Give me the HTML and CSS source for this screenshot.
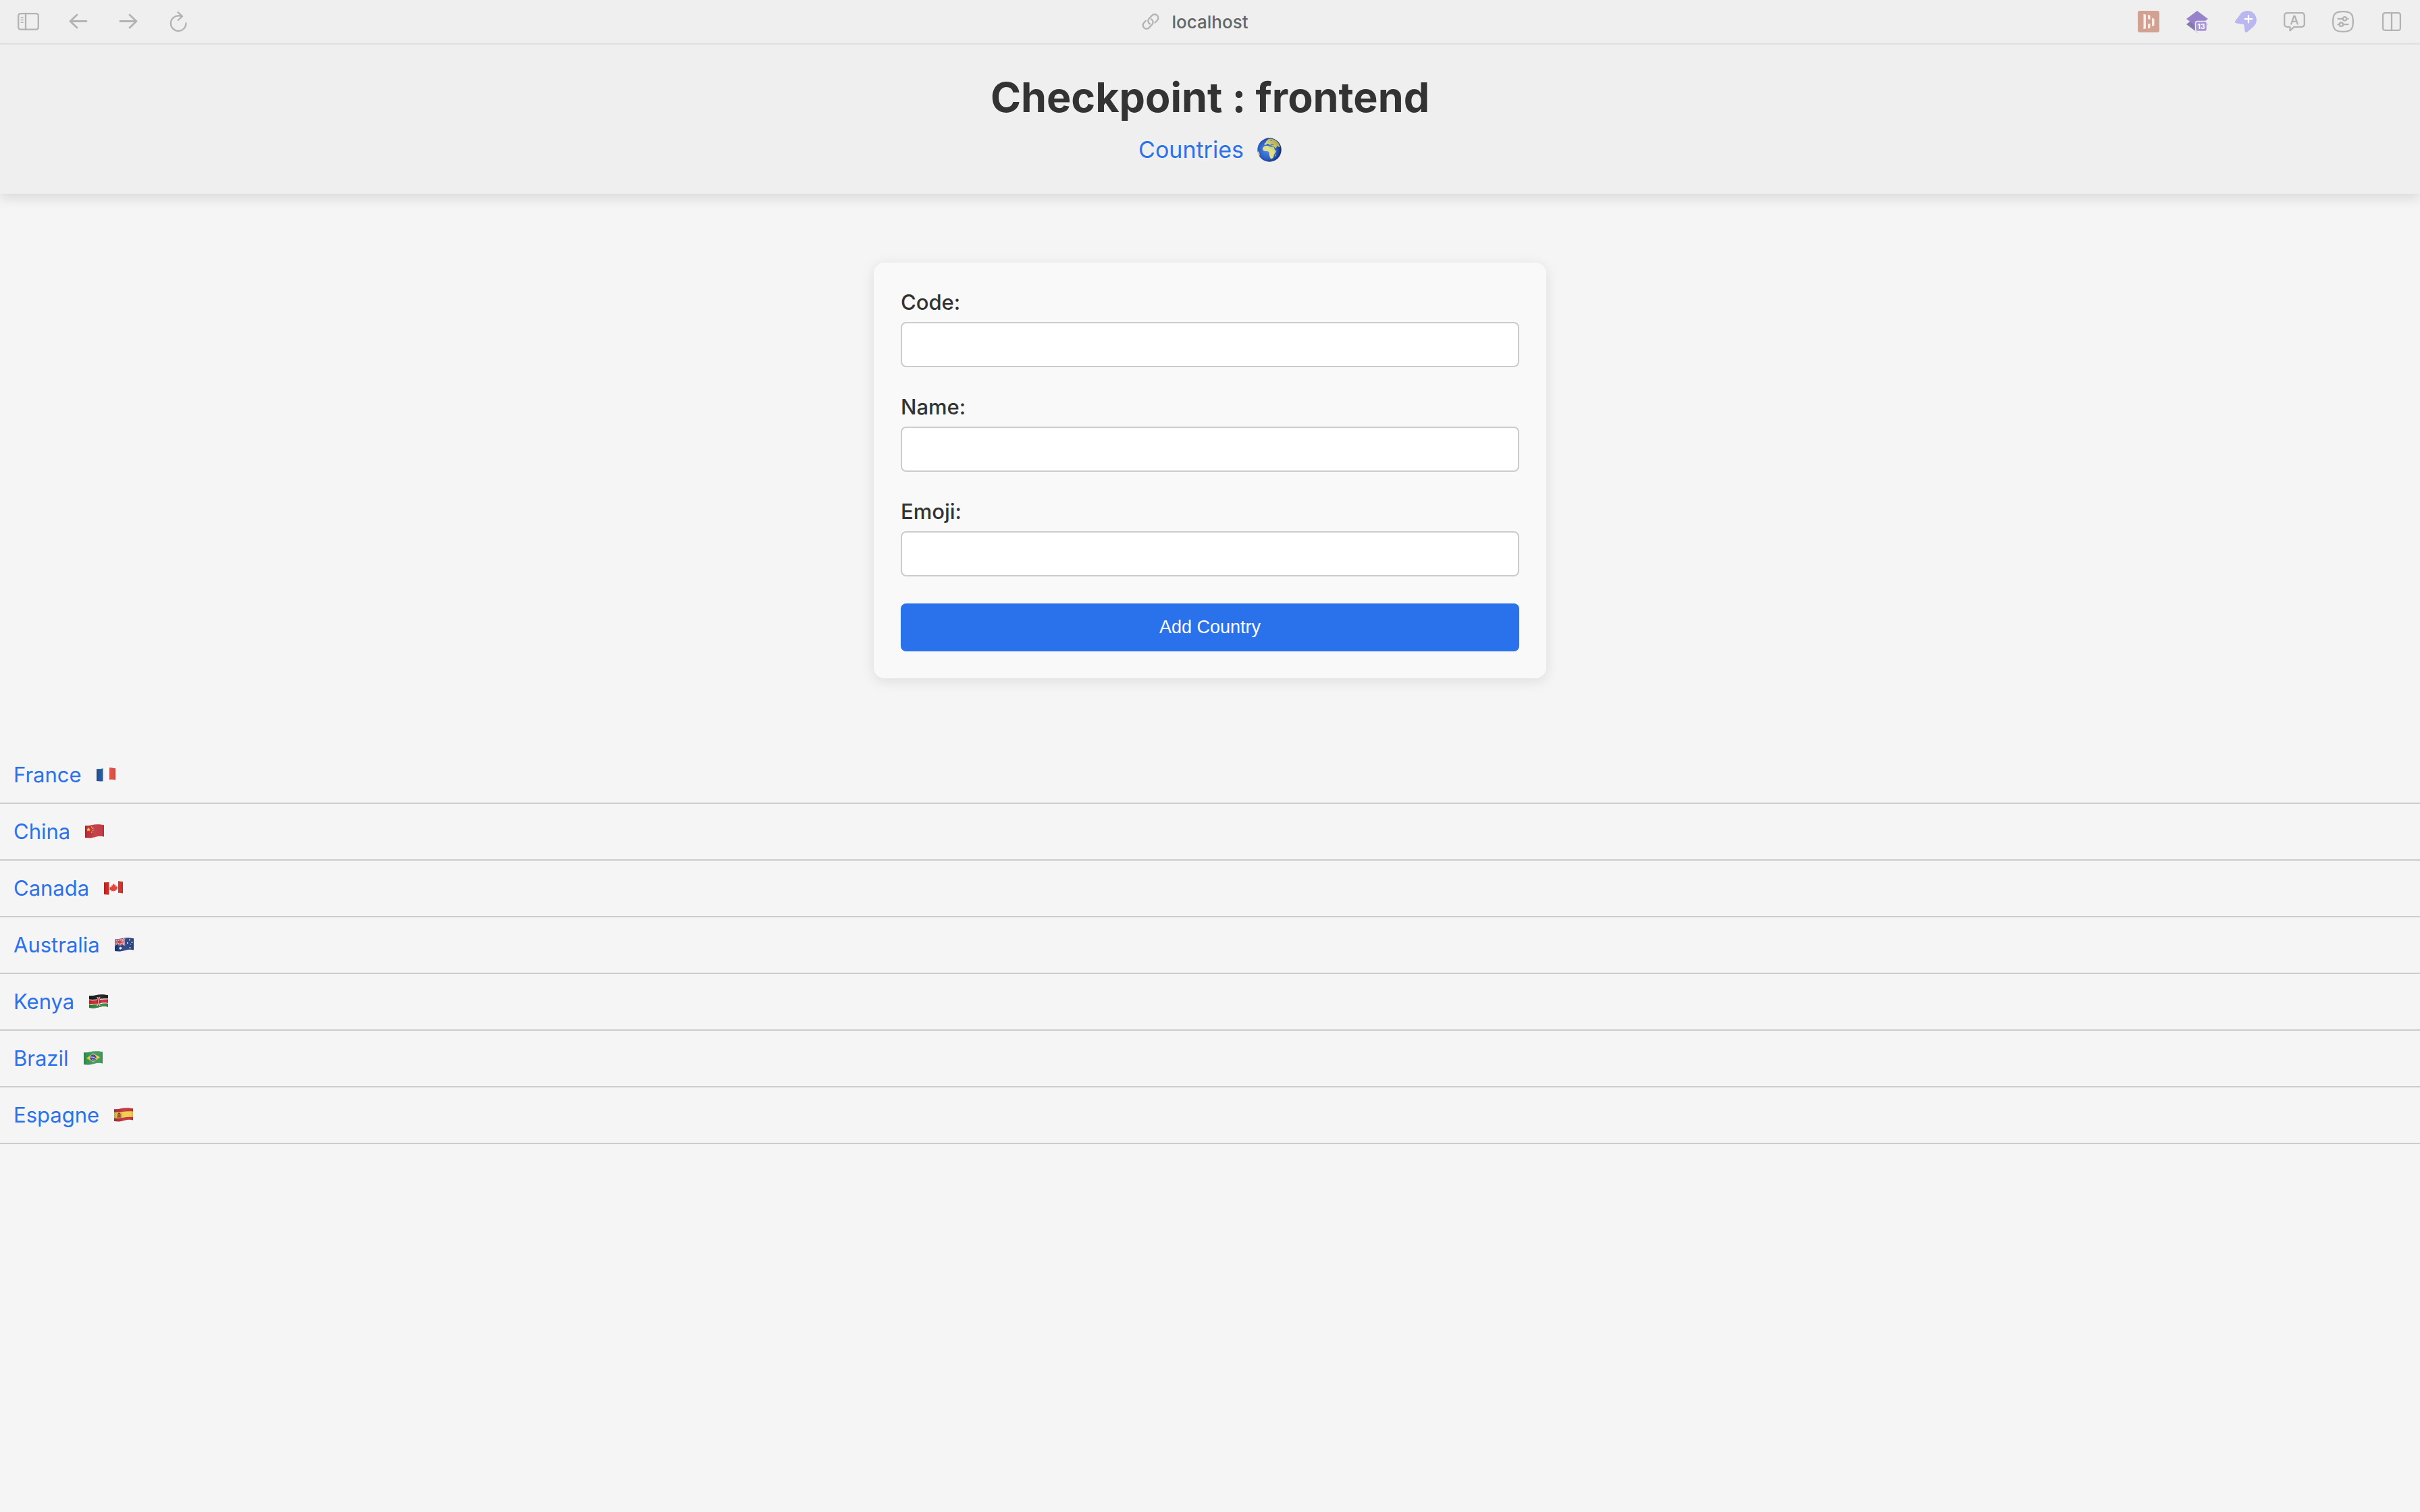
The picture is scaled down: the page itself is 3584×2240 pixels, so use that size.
FILE: index.html
```html
<!DOCTYPE html>
<html lang="en">
<head>
<meta charset="utf-8">
<title>Checkpoint : frontend</title>
<link rel="stylesheet" href="styles.css">
</head>
<body>
<svg class="defs" width="0" height="0" aria-hidden="true">
  <defs>
    <clipPath id="wave"><path d="M0 2.2C7 3 11 .2 18 .2c4 0 7 .6 10 1.1v17.2c-4-1-8-1-12 .2-6 2-11 2.1-16 1.3z"/></clipPath>
    <linearGradient id="shade" x1="0" x2="1"><stop offset="0" stop-color="#000" stop-opacity=".2"/><stop offset=".15" stop-color="#000" stop-opacity=".04"/><stop offset=".5" stop-color="#fff" stop-opacity=".08"/><stop offset=".85" stop-color="#fff" stop-opacity=".04"/><stop offset="1" stop-color="#000" stop-opacity=".12"/></linearGradient>
    <radialGradient id="sea" cx=".42" cy=".5" r=".58"><stop offset="0" stop-color="#4f8df0"/><stop offset=".65" stop-color="#2b5fc4"/><stop offset="1" stop-color="#182a70"/></radialGradient>
    <linearGradient id="land" x1="0" x2="1" y1="1" y2="0"><stop offset="0" stop-color="#e6d98c"/><stop offset=".5" stop-color="#dfe08a"/><stop offset="1" stop-color="#9a9340"/></linearGradient>
  </defs>
</svg>

<div class="toolbar">
  <div class="toolbar-group">
    <button class="tool" aria-label="Sidebar"><svg viewBox="0 0 32 32"><rect x="1.2" y="4.2" width="29.6" height="23.4" rx="3"/><path d="M12 4v24"/><path class="thin" d="M5.2 9.8h3M5.2 13.5h3M5.2 17.2h3"/></svg></button>
    <button class="tool" aria-label="Back"><svg viewBox="0 0 32 32"><path class="bold" d="M28 15.500H4M14 6L4 15.500l10 9.500"/></svg></button>
    <button class="tool" aria-label="Forward"><svg viewBox="0 0 32 32"><path class="bold" d="M4 15.500h24M18 6l10 9.500L18 25"/></svg></button>
    <button class="tool" aria-label="Reload"><svg viewBox="0 0 32 32"><path d="M20.500 7.800C19 7.400 17.500 7.200 16 7.300A11.300 11.300 0 1 0 27.500 18.500M15.500 2.200l6.500 6-6.300 5.800"/></svg></button>
  </div>
  <div class="address">
    <svg class="link-icon" viewBox="0 0 26 26"><path d="M11.800 16.300a5 5 0 0 1-1.500-7.200l5-5.300a5.200 5.200 0 0 1 7.500 7.500l-3.200 3.200"/><path d="M14 9.500a5 5 0 0 1 1.700 7.300l-5 5.300a5.200 5.200 0 0 1-7.500-7.500l2.700-2.800"/></svg>
    <span>localhost</span>
  </div>
  <div class="toolbar-group toolbar-end">
    <button class="tool" aria-label="Dashboard"><svg viewBox="0 0 32 32"><rect class="plain" width="32" height="32" rx="3" fill="#d2a191"/><path class="plain" fill="#f8f0ee" d="M8.500 4.700l3.500 1v20.600l-3.500 1zM15 5.500l3.500 1.500v6L15 12zM15 19.500l3.500-.8v6.500L15 26.500zM21 10.500l3.500 1.400v9.700L21 23z"/></svg></button>
    <button class="tool" aria-label="Layers, 13"><svg viewBox="0 0 32 32"><path class="plain" fill="#8579ad" d="M0 20l5-4h22l5 4-16 12z"/><path class="plain" fill="#9783cc" d="M16 0l16 12-16 12L0 12z"/><rect x="13.500" y="15.500" width="17" height="15" rx="3" fill="#a894d8" stroke="#efefef" stroke-width="1.500"/><text x="22" y="26.500">13</text></svg></button>
    <button class="tool" aria-label="Add pin"><svg viewBox="0 0 32 32"><path class="plain" fill="#bab7f0" d="M9.500 3C16-2 25-.500 29 5c4 5.500 4 12.500-1 18l-9.500 8.300c-2 1.500-4 .700-4-1.800l-1.200-9.300-11-1.700c-2.500-.500-3-2.500-1.500-4z"/><path d="M20 6.800v10.600M14.700 12.100h10.600" style="stroke:#fff"/></svg></button>
    <button class="tool" aria-label="Translate"><svg viewBox="0 0 32 32"><path d="M5 3.200h22a3.800 3.800 0 0 1 3.800 3.800v13a3.800 3.800 0 0 1-3.800 3.800H15.500l-6 5.500v-5.500H5A3.800 3.800 0 0 1 1.200 20V7A3.800 3.800 0 0 1 5 3.200z"/><path d="M11.300 19.500L15.300 8h1.400l4 11.500M12.600 15.800h6.800"/></svg></button>
    <button class="tool" aria-label="Site settings"><svg viewBox="0 0 32 32"><path d="M16 1.100c11.500 0 14.900 3.400 14.900 14.900S27.500 30.900 16 30.900 1.100 27.500 1.100 16 4.500 1.100 16 1.100z"/><path d="M8.500 11.800h7M21.500 11.800h2M8.500 20.200h2M16.500 20.200h7"/><circle cx="18.500" cy="11.800" r="2.700"/><circle cx="13.300" cy="20.200" r="2.700"/></svg></button>
    <button class="tool" aria-label="Split view"><svg viewBox="0 0 32 32"><rect x="3.100" y="3.100" width="25.800" height="25.800" rx="3"/><path d="M16 3v26"/></svg></button>
  </div>
</div>

<header class="header">
  <h1 class="title">Checkpoint : frontend</h1>
  <a class="home-link" href="#">Countries
    <svg class="globe" viewBox="0 0 36 36" aria-hidden="true"><circle cx="18" cy="18" r="17.700" fill="url(#sea)"/><path fill="url(#land)" d="M8 15.500c1-2 2.500-3.300 5-3.500 2.500-.300 4 .300 6 1.200 2 .500 4.500.300 5.500 1.300 1 2 1.500 4.500 3.500 5.200 0 2.300-3 3.800-3.300 6-.300 3-1.700 5.300-3.700 5.300-2 0-2.300-2.500-3-4.500-.700-2.300.300-3.500-1-5.500-1.500-1.500-4.500-.300-6.500-1.300-2-.700-2.800-2.500-2.500-4.200zM10.500 10.300c-.500-1.500 1-2.500 2.200-3.300.300-2.500 3-4.700 6-5.500 3-.500 7 1 9.500 3.300 3 2.500 5 6 5.500 9.200-1.700.700-3-2-4.500-1.500-1 2.500-2 4-4.500 3.500-.700-1.500-2-2.500-2.700-4.200-1.500-.500-3-.300-4-1.500-1.500-.800-2-1.300-3.500-.5-1.200.500-2.500 1.500-4 .5zM1 20c1.500 1 2.700 3 2.500 5.500L3 27.500C1.500 25 .500 22.500 1 20zM27 25.500l1-1.500c.500 1.500-.500 3.500-1.500 4z"/><path fill="none" stroke="#214e9c" stroke-width="1" d="M14 9.500c1.500.200 2.500 1 3.500 1.800M19.500 10c2-.500 3 .5 4.500.200M24 13c1.500 1.500 2 3 3 4.500M20 5c.5-1 1-2 1.500-1.500"/></svg>
  </a>
</header>

<main>
  <form class="card">
    <div class="field"><label for="code">Code:</label><input id="code" type="text"></div>
    <div class="field"><label for="name">Name:</label><input id="name" type="text"></div>
    <div class="field"><label for="emoji">Emoji:</label><input id="emoji" type="text"></div>
    <button class="submit" type="button">Add Country</button>
  </form>

  <ul class="countries">
    <li><a href="#">France <svg class="flag" viewBox="0 0 28 21"><g clip-path="url(#wave)"><path fill="#275ba3" d="M0 0h10v21H0z"/><path fill="#f7f7f7" d="M9.500 0H19v21H9.500z"/><path fill="#dc4a3f" d="M19 0h9v21h-9z"/><path fill="url(#shade)" d="M0 0h28v21H0z"/></g></svg></a></li>
    <li><a href="#">China <svg class="flag" viewBox="0 0 28 21"><g clip-path="url(#wave)"><path fill="#c2353f" d="M0 0h28v21H0z"/><path fill="#ffe03a" d="M5 4.500l.900 2.200 2.200.1-1.700 1.500.6 2.300-2-1.300L3 10.600l.6-2.300L2 6.800l2.200-.1zM9 3.500h1.500V5H9zM11 5.500h1.300V7H11zM11 8.500h1.300V10H11zM9 11h1.500v1.400H9z"/><path fill="url(#shade)" d="M0 0h28v21H0z"/></g></svg></a></li>
    <li><a href="#">Canada <svg class="flag" viewBox="0 0 28 21"><g clip-path="url(#wave)"><path fill="#fafafa" d="M0 0h28v21H0z"/><path fill="#d92b23" d="M0 0h7.500v21H0zM21 0h7v21h-7z"/><path fill="#e8352c" d="M14.300 3.800l1.500 2.500 1.500-.7-.5 3.500 1.600-1.500.5 1.100 1.400.1-.8 2.200.7.800-3.400 2.200.3 1.200-2.600-.4v2.200h-.6v-2.200l-3 .8.400-1.400-3.300-1.500.8-.9-.7-2 1.400-.3.500-1.200 1.600 1.300-.6-3.200 1.600.300z"/><path fill="url(#shade)" d="M0 0h28v21H0z"/></g></svg></a></li>
    <li><a href="#">Australia <svg class="flag" viewBox="0 0 28 21"><g clip-path="url(#wave)"><path fill="#24407f" d="M0 0h28v21H0z"/><path stroke="#e9e9f2" stroke-width="2.400" d="M0 2l15 9M0 11l15-10"/><path stroke="#e9e9f2" stroke-width="4" d="M7.500 0v11.500M0 6.500h15"/><path stroke="#d3363f" stroke-width="1" d="M0 2l15 9M0 11l15-10"/><path stroke="#d3363f" stroke-width="2" d="M7.500 0v11.500M0 6.500h15"/><path fill="#fff" d="M8.300 13l.8 1.500 1.700-.2-.9 1.500.7 1.500-1.600-.2-1.100 1.400-.5-1.700-1.600-.6 1.400-.9-.1-1.600 1.400.8z"/><g fill="#fff"><circle cx="22" cy="3.500" r="1"/><circle cx="19" cy="8" r="1"/><circle cx="25.500" cy="7" r="1"/><circle cx="22.500" cy="15" r="1"/><circle cx="23.700" cy="10" r=".6"/></g><path fill="url(#shade)" d="M0 0h28v21H0z"/></g></svg></a></li>
    <li><a href="#">Kenya <svg class="flag" viewBox="0 0 28 21"><g clip-path="url(#wave)"><path fill="#1b1b1b" d="M0 0h28v21H0z"/><path fill="#f1f1f1" d="M0 7.500c9 1.500 16-2 28-1.200V14c-12-1-18 3-28 1.800z"/><path fill="#cf2b30" d="M0 8.800c9 1.500 16-2 28-1.200v5.100c-12-1-18 3-28 1.800z"/><path fill="#2f8b3c" d="M0 15.800C10 17 16 13 28 14v7H0z"/><path stroke="#eee" stroke-width="1" d="M12 4l4 13M16 4l-4 13"/><path fill="#bf2026" d="M14 3.500c3 3.500 3 10 0 14-3-4-3-10.500 0-14z"/><path fill="#fff" d="M13.600 5h.8v11h-.8z"/><path fill="#222" d="M11.700 8c1 1.500 1 4 0 5.500zM16.300 8c-1 1.500-1 4 0 5.500z"/><path fill="url(#shade)" d="M0 0h28v21H0z"/></g></svg></a></li>
    <li><a href="#">Brazil <svg class="flag" viewBox="0 0 28 21"><g clip-path="url(#wave)"><path fill="#399a58" d="M0 0h28v21H0z"/><path fill="#f5cf40" d="M4 10.800l10-7.300 10 5.800-10 7z"/><circle cx="14" cy="10" r="4.700" fill="#364596"/><path fill="none" stroke="#e6ebf3" stroke-width="1" d="M9.700 9.200c3-.7 6.500.3 8.500 2.500"/><path fill="#dce4f4" d="M12 12h1v1h-1zM14.500 12.500h1v1h-1z"/><path fill="url(#shade)" d="M0 0h28v21H0z"/></g></svg></a></li>
    <li><a href="#">Espagne <svg class="flag" viewBox="0 0 28 21"><g clip-path="url(#wave)"><path fill="#bf3038" d="M0 0h28v21H0z"/><path fill="#f3cb48" d="M0 6.500C9 8 16 4 28 5.500V14c-12-1.500-18 3-28 1.500z"/><path fill="#a8553a" d="M4.500 9h1v5h-1zM9.500 8.500h1v5h-1zM5.800 9.500h3.500v3.300l-1.700 1.500-1.800-1.500z"/><path fill="#7b3040" d="M6 7.800h3v1.300H6zM4.300 13.500h6.500v1H4.300z"/><path fill="url(#shade)" d="M0 0h28v21H0z"/></g></svg></a></li>
  </ul>
</main>
</body>
</html>
```
FILE: styles.css
```css
* {
  box-sizing: border-box;
}

body {
  margin: 0;
  min-height: 100vh;
  background: #f5f5f5;
  color: #333;
  font-family: Inter, "Liberation Sans", sans-serif;
  font-size: 31px;
}

a {
  color: #2a72ec;
  text-decoration: none;
}

.defs {
  position: absolute;
}

.toolbar {
  display: grid;
  grid-template-columns: 1fr auto 1fr;
  align-items: center;
  height: 66px;
  padding: 0 26px;
  background: #efefef;
  border-bottom: 2px solid #e2e2e2;
}

.toolbar-group {
  display: flex;
  gap: 42px;
}

.toolbar-end {
  justify-content: flex-end;
  gap: 40px;
}

.tool {
  width: 32px;
  height: 32px;
  padding: 0;
  border: 0;
  background: none;
}

.tool svg {
  display: block;
  width: 32px;
  height: 32px;
  overflow: visible;
}

.toolbar svg {
  fill: none;
  stroke: #b3b3b3;
  stroke-width: 2.3;
  stroke-linecap: round;
  stroke-linejoin: round;
}

.toolbar .thin {
  stroke-width: 1.5;
}

.toolbar .bold {
  stroke-width: 2.8;
}

.toolbar .plain {
  stroke: none;
}

.tool text {
  fill: #fff;
  stroke: none;
  font: 700 10px Inter, sans-serif;
  text-anchor: middle;
}

.address {
  display: flex;
  align-items: center;
  gap: 18px;
  padding-right: 44px;
  color: #666;
  font-size: 26px;
  font-weight: 500;
}

.link-icon {
  width: 26px;
  height: 26px;
}

.header {
  display: flex;
  flex-direction: column;
  align-items: center;
  gap: 18px;
  padding: 40px 40px 43px;
  background: #efefef;
  box-shadow: 0 8px 16px rgba(0, 0, 0, 0.1);
}

.title {
  margin: 0;
  font-size: 61px;
  font-weight: 700;
  line-height: 76px;
}

.home-link {
  display: flex;
  align-items: center;
  gap: 20px;
  font-size: 34px;
  line-height: 44px;
}

.globe {
  width: 36px;
  height: 36px;
}

.card {
  display: flex;
  flex-direction: column;
  gap: 40px;
  width: 100%;
  max-width: 996px;
  margin: 102px auto;
  padding: 40px;
  background: #f9f9f9;
  border-radius: 16px;
  box-shadow: 0 4px 20px rgba(0, 0, 0, 0.1);
}

.field {
  display: flex;
  flex-direction: column;
  gap: 10px;
}

.field label {
  font-weight: 500;
  line-height: 38px;
}

.field input {
  width: 100%;
  height: 67px;
  padding: 16px;
  background: #fff;
  border: 2px solid #ccc;
  border-radius: 8px;
  font: inherit;
}

.submit {
  height: 71px;
  border: 0;
  border-radius: 8px;
  background: #2a72ec;
  color: #fff;
  font-family: "Liberation Sans", Arial, sans-serif;
  font-size: 27px;
}

.countries {
  margin: 0;
  padding: 0;
  list-style: none;
}

.countries li {
  padding: 20px;
  border-bottom: 2px solid #ccc;
}

.countries a {
  display: flex;
  align-items: center;
  gap: 22px;
  width: fit-content;
  line-height: 42px;
}

.flag {
  width: 28px;
  height: 21px;
  margin-bottom: 2px;
}
```
